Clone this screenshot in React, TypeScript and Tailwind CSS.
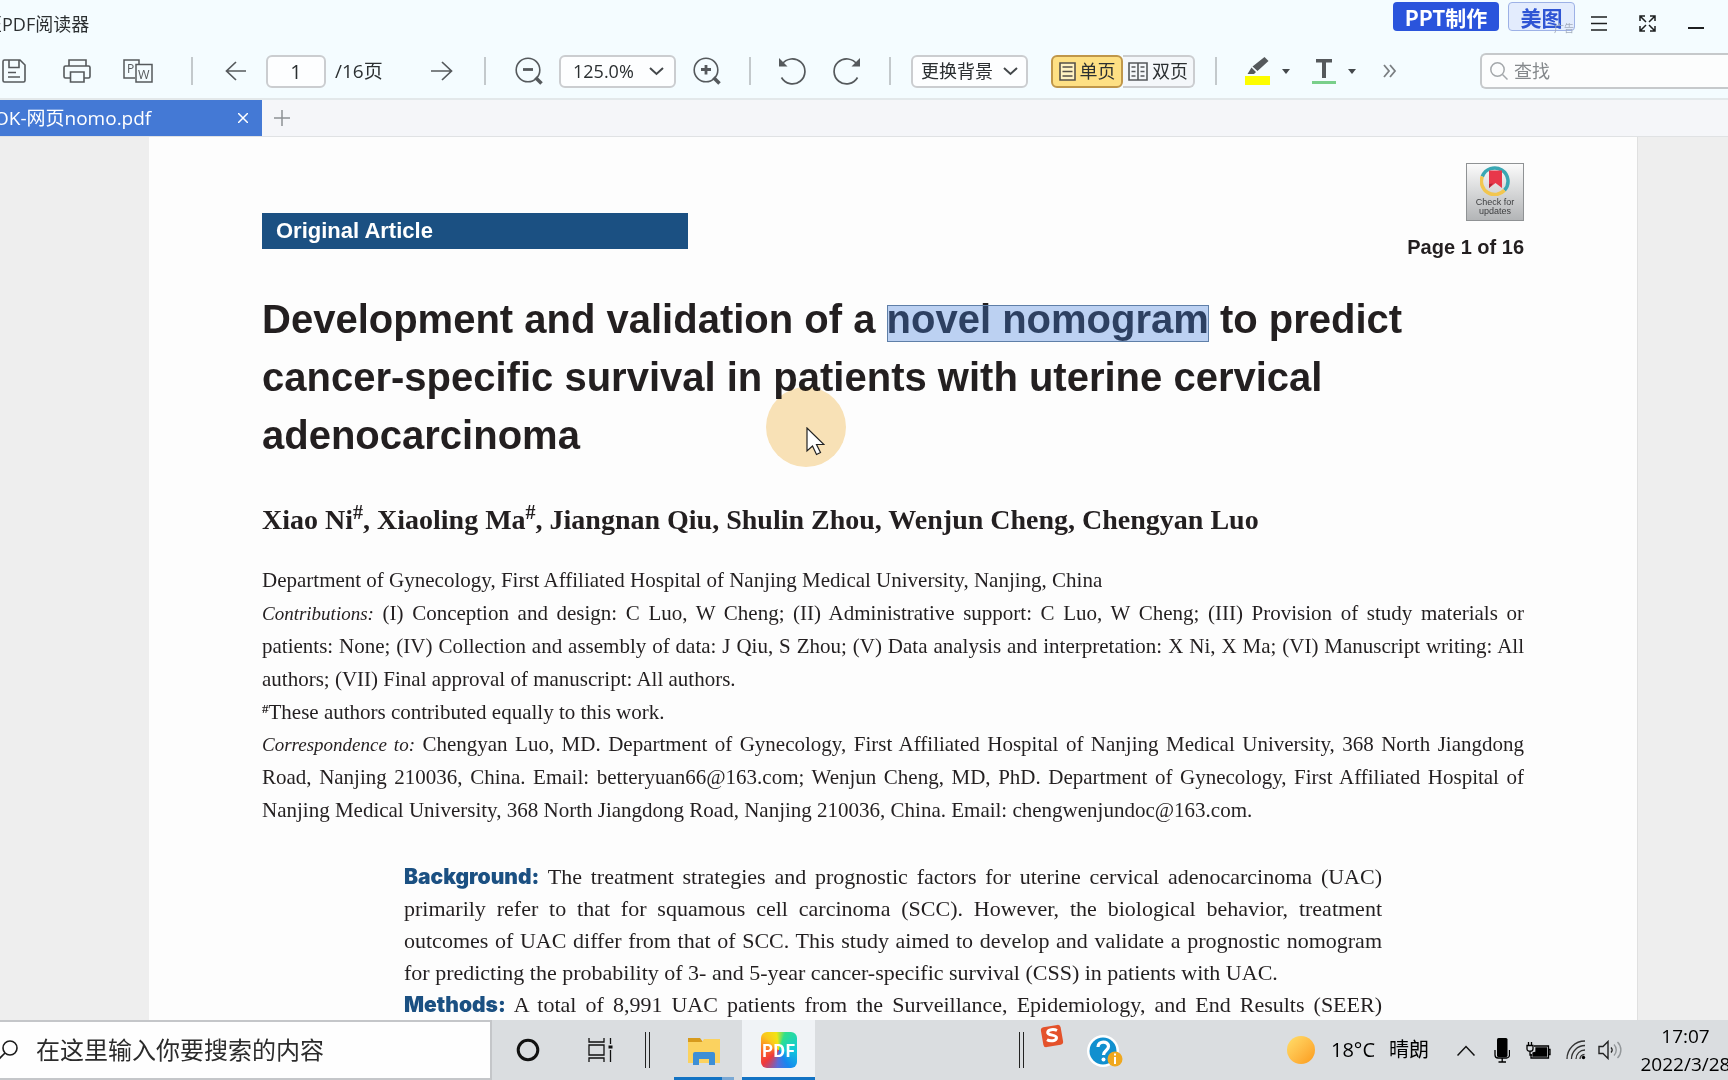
import { useState, type ReactNode } from "react";

const uiFont = "font-['Open_Sans','Noto_Sans_CJK_SC',sans-serif]";

function Divider({ className = "" }: { className?: string }) {
  return <span className={`h-7 w-0.5 shrink-0 bg-[#c3c9cc] ${className}`} />;
}

function IconButton({ label, className = "", children }: { label: string; className?: string; children: ReactNode }) {
  return (
    <button type="button" aria-label={label} className={`flex shrink-0 items-center justify-center text-[#55595c] ${className}`}>
      {children}
    </button>
  );
}

function Chevron({ className = "" }: { className?: string }) {
  return (
    <svg width="15" height="9" viewBox="0 0 15 9" fill="none" stroke="#44484b" strokeWidth="2" className={className}>
      <path d="M1 1l6.5 6L14 1" />
    </svg>
  );
}

function Caret() {
  return (
    <svg width="8" height="5" viewBox="0 0 8 5" fill="#44484b">
      <path d="M0 0h8L4 5z" />
    </svg>
  );
}

function TitleBar() {
  return (
    <header className="flex h-11 shrink-0 items-start">
      <h1 className="-ml-4 shrink-0 pt-3 text-[18px] leading-6 text-[#2b2f31]">匠PDF阅读器</h1>
      <div className="ml-auto flex shrink-0 items-start pr-6">
        <button type="button" className="mt-0.5 h-[29px] w-[106px] rounded bg-[#2a54dc] font-['Noto_Sans_CJK_SC',sans-serif] text-[21px] leading-[28px] font-bold text-white">
          PPT制作
        </button>
        <button
          type="button"
          className="relative mt-0.5 ml-[9px] h-[29px] w-[67px] rounded border border-[#9db1e6] bg-[#e3ecfd] font-['Noto_Sans_CJK_SC',sans-serif] text-[21px] leading-[26px] font-bold text-[#2f55d4]"
        >
          美图
          <span className="absolute right-0 -bottom-1 text-[10px] leading-3 font-normal text-[#a3acbd]">广告</span>
        </button>
        <IconButton label="菜单" className="mt-4 ml-4">
          <svg width="16" height="15" viewBox="0 0 16 15" stroke="#1d1f20" strokeWidth="1.5">
            <path d="M0 1h16M0 7.5h16M0 14h16" />
          </svg>
        </IconButton>
        <IconButton label="全屏" className="mt-[15px] ml-8">
          <svg width="17" height="17" viewBox="0 0 17 17" fill="none" stroke="#1d1f20" strokeWidth="1.5">
            <path d="M1 6V1h5M11 1h5v5M16 11v5h-5M6 16H1v-5M1 1l6 6M16 1l-6 6M16 16l-6-6M1 16l6-6" />
          </svg>
        </IconButton>
        <IconButton label="最小化" className="mt-[27px] ml-8">
          <svg width="16" height="2" viewBox="0 0 16 2">
            <path d="M0 0h16v2H0z" fill="#1d1f20" />
          </svg>
        </IconButton>
      </div>
    </header>
  );
}

function Toolbar() {
  const [page, setPage] = useState("1");
  return (
    <div role="toolbar" className="flex h-[56px] shrink-0 items-center border-b-2 border-[#e3e8ea] text-[18px] text-[#2b2f31]">
      <IconButton label="保存" className="ml-0.5">
        <svg width="24" height="24" viewBox="0 0 24 24" fill="none" stroke="currentColor" strokeWidth="1.6">
          <path d="M2.5 1H18l5 5v15.500a1.500 1.500 0 0 1-1.500 1.500h-19A1.500 1.500 0 0 1 1 21.500v-19A1.500 1.500 0 0 1 2.500 1zM7 1v7.500h10V1M6 13.500h8M6 18h12" />
        </svg>
      </IconButton>
      <IconButton label="打印" className="ml-[37px]">
        <svg width="28" height="24" viewBox="0 0 28 24" fill="none" stroke="currentColor" strokeWidth="1.6">
          <path d="M6 7V1h17v6M7 19H2.500A1.500 1.500 0 0 1 1 17.500v-9A1.500 1.500 0 0 1 2.500 7h23A1.500 1.500 0 0 1 27 8.500v9a1.500 1.500 0 0 1-1.500 1.500H21M7.500 13h13.500v10H7.500z" />
        </svg>
      </IconButton>
      <IconButton label="PDF转Word" className="ml-8">
        <svg width="30" height="24" viewBox="0 0 30 24" fill="none" stroke="currentColor" strokeWidth="1.500">
          <path d="M12 19H1V1h15v4M13 5.500h16V23H13z" />
          <text x="4" y="14" fontSize="12" fill="currentColor" stroke="none" fontFamily="Open Sans">P</text>
          <text x="15" y="19.500" fontSize="12.500" fill="currentColor" stroke="none" fontFamily="Open Sans">W</text>
        </svg>
      </IconButton>
      <Divider className="ml-[38px]" />
      <IconButton label="上一页" className="ml-8">
        <svg width="22" height="20" viewBox="0 0 22 20" fill="none" stroke="currentColor" strokeWidth="1.7">
          <path d="M21 10H1M11 1L1.500 10l9.500 9" />
        </svg>
      </IconButton>
      <label className="ml-[19px] flex shrink-0 items-center">
        <input
          aria-label="页码"
          value={page}
          onChange={(e) => setPage(e.target.value)}
          className="h-[33px] w-[60px] rounded-md border-2 border-[#cbcdd0] bg-[#fdfeff] text-center text-[20px]"
        />
        <span className="ml-[9px] w-[96px] text-[19px]">/16页</span>
      </label>
      <IconButton label="下一页">
        <svg width="22" height="20" viewBox="0 0 22 20" fill="none" stroke="currentColor" strokeWidth="1.7">
          <path d="M0 10h21M11 1l9.500 9-9.500 9" />
        </svg>
      </IconButton>
      <Divider className="ml-[31px]" />
      <IconButton label="缩小" className="ml-[29px]">
        <svg width="28" height="28" viewBox="0 0 28 28" fill="none" stroke="currentColor">
          <circle cx="13" cy="13" r="11.800" strokeWidth="1.6" />
          <path d="M8 12.500h10" strokeWidth="2.800" />
          <path d="M20.500 20.500l6 6" strokeWidth="3.500" />
        </svg>
      </IconButton>
      <div className="relative ml-4 shrink-0">
        <select aria-label="缩放比例" defaultValue="125.0%" className="block h-[33px] w-[117px] appearance-none rounded-md border-2 border-[#cbcdd0] bg-[#fdfeff] pl-3 text-[18px]">
          <option>125.0%</option>
        </select>
        <Chevron className="pointer-events-none absolute top-3 right-3" />
      </div>
      <IconButton label="放大" className="ml-[17px]">
        <svg width="28" height="28" viewBox="0 0 28 28" fill="none" stroke="currentColor">
          <circle cx="13" cy="13" r="11.800" strokeWidth="1.6" />
          <path d="M8 12.500h10M13 8v9.500" strokeWidth="2.800" />
          <path d="M20.500 20.500l6 6" strokeWidth="3.500" />
        </svg>
      </IconButton>
      <Divider className="ml-7" />
      <IconButton label="向左旋转" className="ml-7">
        <svg width="28" height="28" viewBox="0 0 28 28" fill="none" stroke="currentColor" strokeWidth="1.700">
          <path d="M3 7.500A12.500 12.500 0 1 1 2.500 20.500" />
          <path d="M0 1v8.500h8.500z" fill="currentColor" stroke="none" />
        </svg>
      </IconButton>
      <IconButton label="向右旋转" className="ml-[25px]">
        <svg width="28" height="28" viewBox="0 0 28 28" fill="none" stroke="currentColor" strokeWidth="1.700">
          <path d="M25 7.500A12.500 12.500 0 1 0 25.500 20.500" />
          <path d="M28 1v8.500h-8.500z" fill="currentColor" stroke="none" />
        </svg>
      </IconButton>
      <Divider className="ml-[29px]" />
      <button type="button" className="ml-5 flex h-[33px] w-[117px] shrink-0 items-center justify-center gap-2.5 rounded-md border-2 border-[#cbcdd0] bg-[#fdfeff]">
        更换背景
        <Chevron />
      </button>
      <div className="ml-[23px] flex h-[33px] shrink-0">
        <button type="button" aria-pressed="true" className="flex w-[72px] items-center justify-center gap-1 rounded-md border-2 border-[#c0974a] bg-[#fee084]">
          <svg width="17" height="19" viewBox="0 0 17 19" fill="#fff2c2" stroke="#55504a" strokeWidth="1.600">
            <path d="M1 1h15v17H1z" />
            <path d="M3.500 5h10M3.500 9.500h10M3.500 14h10" strokeWidth="1.300" />
          </svg>
          单页
        </button>
        <button type="button" aria-pressed="false" className="flex w-[72px] items-center justify-center gap-1 rounded-r-md border-2 border-l-0 border-[#cbcdd0] bg-[#f4f7fa]">
          <svg width="20" height="19" viewBox="0 0 20 19" fill="none" stroke="#55595c" strokeWidth="1.600">
            <path d="M1 1h18v17H1zM10 1v17" />
            <path d="M3.500 5h4M3.500 9.500h4M3.500 14h4M12.500 5h4M12.500 9.500h4M12.500 14h4" strokeWidth="1.300" />
          </svg>
          双页
        </button>
      </div>
      <Divider className="ml-5" />
      <IconButton label="高亮" className="ml-7 gap-3">
        <svg width="25" height="28" viewBox="0 0 25 28">
          <path d="M0 19h25v9H0z" fill="#fdfd00" />
          <path d="M19.500 0l4 4L12.500 14l-5-4.500zM6.500 10.500l4.500 4.500-2 2H2.500z" fill="#55595c" />
        </svg>
        <Caret />
      </IconButton>
      <IconButton label="下划线" className="ml-[22px] gap-3">
        <svg width="24" height="26" viewBox="0 0 24 26">
          <path d="M4 1h16v3.500h-6V20h-4V4.500H4z" fill="#55595c" />
          <path d="M0 23h24v3H0z" fill="#79cf8a" />
        </svg>
        <Caret />
      </IconButton>
      <IconButton label="更多" className="ml-[27px]">
        <svg width="14" height="14" viewBox="0 0 14 14" fill="none" stroke="#7b7f82" strokeWidth="1.800">
          <path d="M1 1l5 6-5 6M7 1l5 6-5 6" />
        </svg>
      </IconButton>
      <label className="ml-[83px] flex h-9 min-w-0 flex-1 items-center rounded-l-md border-2 border-r-0 border-[#c6c9cb] bg-[#fcfdfd] pl-2">
        <svg width="18" height="18" viewBox="0 0 18 18" fill="none" stroke="#a4a8ab" strokeWidth="1.500" className="shrink-0">
          <circle cx="7.500" cy="7.500" r="6.700" />
          <path d="M12.500 12.500l5 5" />
        </svg>
        <input type="search" aria-label="查找" placeholder="查找" className="ml-1.5 min-w-0 flex-1 bg-transparent placeholder:text-[#85898c]" />
      </label>
    </div>
  );
}

function TabBar() {
  return (
    <nav className="flex h-[37px] shrink-0 items-stretch border-b border-[#e0e2e4] bg-[#f5f6f9]">
      <div className="flex w-[262px] items-center justify-between overflow-hidden bg-[#4479d5] pr-3.5 text-[19px] text-white">
        <span className="-ml-1.5 whitespace-nowrap">OK-网页nomo.pdf</span>
        <button type="button" aria-label="关闭标签">
          <svg width="10" height="10" viewBox="0 0 10 10" stroke="white" strokeWidth="1.500">
            <path d="M0 0l10 10M10 0L0 10" />
          </svg>
        </button>
      </div>
      <button type="button" aria-label="新建标签" className="ml-3">
        <svg width="16" height="16" viewBox="0 0 16 16" stroke="#8d9194" strokeWidth="1.500">
          <path d="M8 0v16M0 8h16" />
        </svg>
      </button>
    </nav>
  );
}

function CheckForUpdates() {
  return (
    <button type="button" className="flex h-[58px] w-[58px] flex-col items-center border border-[#8f9294] bg-linear-to-b from-[#fbfbfb] to-[#b3b5b7] pt-0.5">
      <svg width="30" height="30" viewBox="0 0 30 30" fill="none" strokeWidth="3.500">
        <path d="M2.300 10.500A13.300 13.300 0 1 1 24.500 24.300" stroke="#3aa7b3" />
        <path d="M24.500 24.300A13.300 13.300 0 0 1 2.300 10.500" stroke="#f2c64f" />
        <path d="M9 4.500h13v17.500l-6.500-5-6.500 5z" fill="#e8374a" />
        <path d="M9 22v-4l4-0.500z" fill="#a8283a" />
      </svg>
      <span className="mt-0.5 font-['Liberation_Sans',sans-serif] text-[9px] leading-[9px] text-[#3c3d3f]">
        Check for
        <br />
        updates
      </span>
    </button>
  );
}

function Lines({ lines, last }: { lines: ReactNode[]; last?: ReactNode }) {
  return (
    <>
      {lines.map((line, i) => (
        <span key={i} className="block text-justify whitespace-nowrap [text-align-last:justify]">
          {line}
        </span>
      ))}
      {last && <span className="block whitespace-nowrap">{last}</span>}
    </>
  );
}

function Article() {
  return (
    <main className="flex min-h-0 flex-1 overflow-hidden bg-[#eeeeee] pr-[90px] pl-[149px]">
      <article className="relative h-max flex-1 border-r border-[#e0e0e0] bg-[#fdfdfd] px-[113px] text-[#231f20]">
        <div className="flex justify-between pt-[26px]">
          <p className="mt-[50px] h-9 w-[426px] bg-[#1b5082] pl-3.5 font-['Liberation_Sans',sans-serif] text-[22px] leading-9 font-bold text-white">
            Original Article
          </p>
          <div className="flex flex-col items-end">
            <CheckForUpdates />
            <p className="mt-3.5 font-['Liberation_Sans',sans-serif] text-[20px] leading-6 font-bold">Page 1 of 16</p>
          </div>
        </div>

        <h2 className="mt-[31px] font-['Liberation_Sans',sans-serif] text-[40px] leading-[58px] font-bold whitespace-nowrap">
          Development and validation of a{" "}
          <mark className="relative bg-transparent text-inherit">
            novel nomogram
            <span className="absolute inset-x-0 top-2 h-[37px] border border-[#5f7fa8] bg-[#417fdc]/35" />
          </mark>{" "}
          to predict
          <br />
          cancer-specific survival in patients with uterine cervical
          <br />
          adenocarcinoma
        </h2>

        <div className="font-['Liberation_Serif',serif]">
          <p className="mt-8 text-[28px] leading-[48px] font-bold whitespace-nowrap">
            Xiao Ni<sup className="text-[20px]">#</sup>, Xiaoling Ma<sup className="text-[20px]">#</sup>, Jiangnan Qiu, Shulin Zhou, Wenjun Cheng, Chengyan Luo
          </p>

          <div className="mt-5 text-[21px] leading-[33px]">
            <p>Department of Gynecology, First Affiliated Hospital of Nanjing Medical University, Nanjing, China</p>
            <p>
              <Lines
                lines={[
                  <>
                    <em className="text-[19px]">Contributions:</em> (I) Conception and design: C Luo, W Cheng; (II) Administrative support: C Luo, W Cheng; (III) Provision of study materials or
                  </>,
                  "patients: None; (IV) Collection and assembly of data: J Qiu, S Zhou; (V) Data analysis and interpretation: X Ni, X Ma; (VI) Manuscript writing: All",
                ]}
                last="authors; (VII) Final approval of manuscript: All authors."
              />
            </p>
            <p className="leading-8">
              <sup className="text-[13px] font-bold">#</sup>These authors contributed equally to this work.
            </p>
            <p>
              <Lines
                lines={[
                  <>
                    <em className="text-[19px]">Correspondence to:</em> Chengyan Luo, MD. Department of Gynecology, First Affiliated Hospital of Nanjing Medical University, 368 North Jiangdong
                  </>,
                  "Road, Nanjing 210036, China. Email: betteryuan66@163.com; Wenjun Cheng, MD, PhD. Department of Gynecology, First Affiliated Hospital of",
                ]}
                last="Nanjing Medical University, 368 North Jiangdong Road, Nanjing 210036, China. Email: chengwenjundoc@163.com."
              />
            </p>
          </div>

          <section className="mx-[142px] mt-[34px] text-[22px] leading-8">
            <p>
              <Lines
                lines={[
                  <>
                    <strong className="font-['Inter',sans-serif] text-[21px] font-black text-[#1b5082]">Background:</strong> The treatment strategies and prognostic factors for uterine cervical adenocarcinoma (UAC)
                  </>,
                  "primarily refer to that for squamous cell carcinoma (SCC). However, the biological behavior, treatment",
                  "outcomes of UAC differ from that of SCC. This study aimed to develop and validate a prognostic nomogram",
                ]}
                last="for predicting the probability of 3- and 5-year cancer-specific survival (CSS) in patients with UAC."
              />
            </p>
            <p>
              <Lines
                lines={[
                  <>
                    <strong className="font-['Inter',sans-serif] text-[21px] font-black text-[#1b5082]">Methods:</strong> A total of 8,991 UAC patients from the Surveillance, Epidemiology, and End Results (SEER)
                  </>,
                ]}
              />
            </p>
          </section>
        </div>

        <div className="pointer-events-none absolute top-[250px] left-[617px] h-20 w-20 rounded-full bg-[#fae3b8] mix-blend-multiply" />
        <svg width="19" height="29" viewBox="0 0 19 29" className="pointer-events-none absolute top-[290px] left-[657px]">
          <path d="M1 1v23l5.500-5 4 8.500 4-2-4-8H18z" fill="white" stroke="#222" strokeWidth="1.200" />
        </svg>
      </article>
    </main>
  );
}

function TaskBar() {
  return (
    <footer className="flex h-[60px] shrink-0 items-center bg-[#dadde0] text-black">
      <label className="flex h-full w-[492px] shrink-0 items-center border-2 border-l-0 border-[#c4c6c9] bg-[#fefefe]">
        <svg width="18" height="20" viewBox="0 0 18 20" fill="none" stroke="#1b1b1b" strokeWidth="1.600" className="shrink-0">
          <circle cx="10" cy="8" r="7" />
          <path d="M5 13l-6 6" />
        </svg>
        <input aria-label="搜索" placeholder="在这里输入你要搜索的内容" className="ml-[18px] min-w-0 flex-1 bg-transparent text-[24px] placeholder:text-[#2b2b2b]" />
      </label>
      <button type="button" aria-label="Cortana" className="ml-6">
        <svg width="24" height="24" viewBox="0 0 24 24" fill="none">
          <circle cx="12" cy="12" r="9.800" stroke="#111" strokeWidth="3" />
        </svg>
      </button>
      <button type="button" aria-label="任务视图" className="ml-12">
        <svg width="25" height="24" viewBox="0 0 25 24" fill="none" stroke="#111" strokeWidth="1.300">
          <path d="M1 0v4h15V0M1 24v-4h15v4M1 7h15v10H1zM22.500 0v6M22.500 12v12" />
          <path d="M20.500 7.500h4v3h-4z" fill="#111" stroke="none" />
        </svg>
      </button>
      <span className="ml-8 h-9 w-[5px] border-x border-[#222]" />
      <button type="button" aria-label="文件资源管理器" className="ml-6 flex h-full w-[60px] flex-col items-center justify-end">
        <svg width="34" height="28" viewBox="0 0 34 28" className="mb-3">
          <path d="M1 1h12l3 4H1z" fill="#d79a1c" />
          <path d="M1 5h14l2-3h16v24H1z" fill="#fbd25f" />
          <path d="M6 28V17a2 2 0 0 1 2-2h18a2 2 0 0 1 2 2v11h-6v-6H12v6z" fill="#3d8fd6" />
        </svg>
        <span className="flex h-[3px] w-full bg-[#1373c4]">
          <span className="ml-auto h-full w-3 bg-[#7aa8d4]" />
        </span>
      </button>
      <button type="button" className="ml-2 flex h-full w-[73px] flex-col items-center justify-between border-b-[3px] border-[#1373c4] bg-[#f0f3f6] pt-3">
        <span className="h-9 w-9 rounded-md bg-[conic-gradient(from_20deg,#2fe08c,#10c8dc_20%,#1787ef_36%,#5c6bd8_46%,#f0383c_58%,#f9622c_68%,#fbc81c_82%,#f2e413_92%,#2fe08c)] text-center font-['Noto_Sans_CJK_SC',sans-serif] text-[17px] leading-9 font-bold text-white">
          PDF
        </span>
      </button>
      <span className="ml-[204px] h-9 w-[5px] border-x border-[#222]" />
      <button type="button" aria-label="输入法" className="mb-7 ml-4">
        <svg width="24" height="24" viewBox="0 0 24 24">
          <rect x="2" y="2" width="20" height="20" rx="3" fill="#e4522b" transform="rotate(-10 12 12)" />
          <path d="M17 6.500c-3-1.500-9-1.200-9.300 1.800-.3 3.700 9 2 8.800 5.500-.2 3.300-6.500 3.700-9.500 2" fill="none" stroke="white" strokeWidth="3" />
        </svg>
      </button>
      <button type="button" aria-label="帮助" className="mt-1 ml-[23px]">
        <svg width="36" height="34" viewBox="0 0 36 34">
          <circle cx="16" cy="16" r="16" fill="white" />
          <circle cx="16" cy="16" r="13.500" fill="#1190cf" />
          <path d="M11 12c0-6.500 10.500-6.500 10.500-.5 0 4-5 4-5 8.500" fill="none" stroke="white" strokeWidth="3.200" />
          <circle cx="16.500" cy="24.500" r="2" fill="white" />
          <circle cx="28" cy="24" r="7.500" fill="#efa81f" />
          <path d="M28 18.500v2M28 22v7" stroke="white" strokeWidth="2" />
        </svg>
      </button>

      <div className="ml-auto flex h-full shrink-0 items-center">
        <button type="button" className="flex items-center whitespace-nowrap text-[20px]">
          <span className="h-7 w-7 rounded-full bg-linear-to-br from-[#ffdf6a] to-[#fb9a12]" />
          <span className="ml-4">18°C</span>
          <span className="ml-3.5">晴朗</span>
        </button>
        <button type="button" aria-label="显示隐藏的图标" className="ml-7">
          <svg width="18" height="11" viewBox="0 0 18 11" fill="none" stroke="#111" strokeWidth="1.500">
            <path d="M0.500 10.500L9 1.500l8.500 9" />
          </svg>
        </button>
        <svg width="16" height="25" viewBox="0 0 16 25" className="ml-[19px]" role="img" aria-label="麦克风">
          <rect x="3" y="0" width="10.500" height="19" rx="1.500" fill="black" />
          <path d="M1 12v5a3 3 0 0 0 3 3h8.500a3 3 0 0 0 3-3v-5M8.200 20v4M4.500 24h7.500" fill="none" stroke="black" strokeWidth="1.300" />
        </svg>
        <svg width="25" height="17" viewBox="0 0 25 17" className="ml-4" fill="none" stroke="black" strokeWidth="1.300" role="img" aria-label="电池">
          <path d="M8 4h14.500v12H5v-4M22.500 7.500h1.500v5h-1.500" />
          <path d="M10 6h10.500v8H7v-3l3-1z" fill="black" />
          <path d="M1 3.500h6V7c0 3-6 3-6 0zM2.500 0v3.500M5.500 0v3.500M4 9.500V13h2" />
        </svg>
        <svg width="20" height="20" viewBox="0 0 20 20" className="ml-[15px]" fill="none" stroke="#333" strokeWidth="1.300" role="img" aria-label="无线网络">
          <path d="M1 19C1 9 9 1 19 1M5.500 19C5.500 11.500 11.500 5.500 19 5.500M10 19c0-5 4-9 9-9" />
          <path d="M14 19c0-2.500 2-4.500 4.500-4.500" />
          <circle cx="17.500" cy="17.500" r="1.700" fill="black" stroke="none" />
        </svg>
        <svg width="24" height="20" viewBox="0 0 24 20" className="ml-3" fill="none" stroke="#222" strokeWidth="1.400" role="img" aria-label="音量">
          <path d="M1 6.500h4l5-5v17l-5-5H1z" />
          <path d="M13 7.500c1.500 1.500 1.500 3.500 0 5" />
          <path d="M16 4.500c3 3 3 8 0 11M19.500 2c4.500 4.500 4.500 11.500 0 16" stroke="#93979a" />
        </svg>
        <div className="-mr-1 ml-[17px] w-[93px] text-center text-[19px] leading-7">
          <time className="block">17:07</time>
          <time className="block">2022/3/28</time>
        </div>
      </div>
    </footer>
  );
}

export default function App() {
  return (
    <div className={`flex h-screen flex-col overflow-hidden bg-[#f4fcff] ${uiFont}`}>
      <TitleBar />
      <Toolbar />
      <TabBar />
      <Article />
      <TaskBar />
    </div>
  );
}
